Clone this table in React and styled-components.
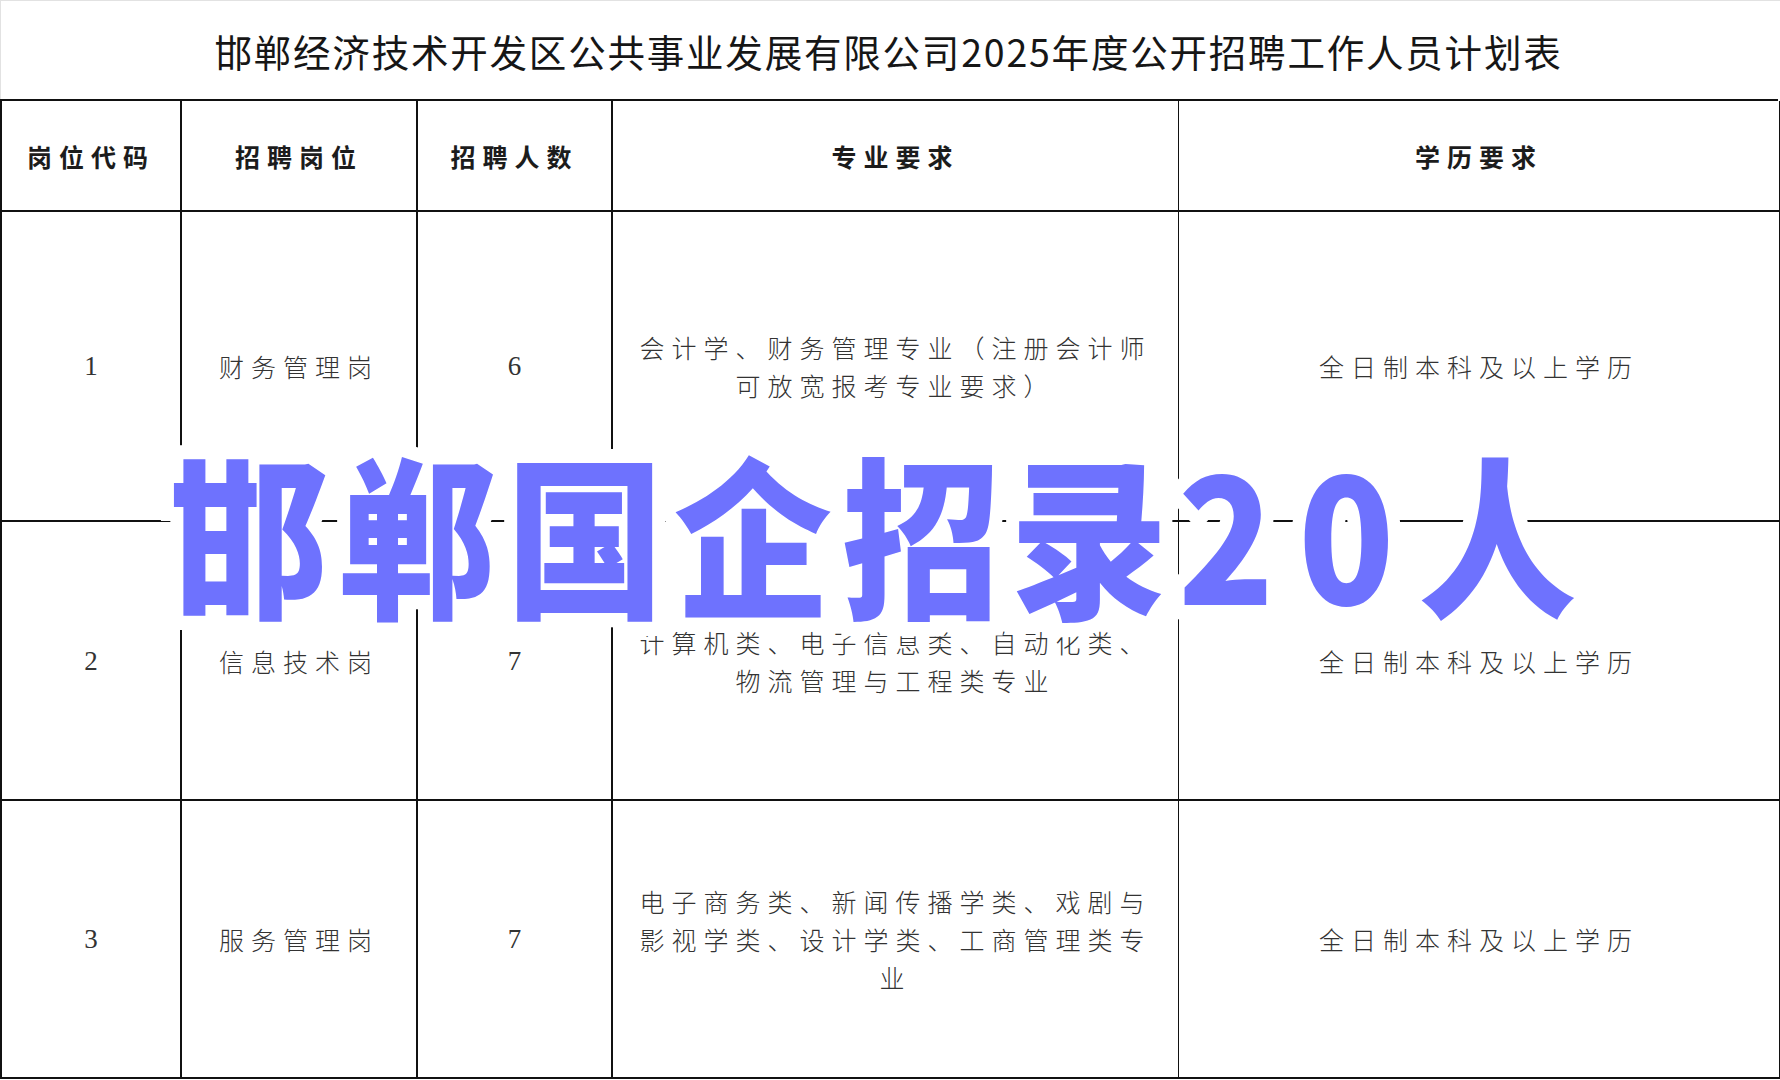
import React from 'react';
import styled, { createGlobalStyle } from 'styled-components';

const GlobalStyle = createGlobalStyle`
  html, body {
    margin: 0;
    padding: 0;
    background: #ffffff;
  }
  body {
    font-family: "Noto Sans CJK SC", "Noto Sans", sans-serif;
  }
`;

const Page = styled.div`
  position: relative;
  width: 1780px;
  height: 1080px;
  overflow: hidden;
  background: #fff;
`;

const TitleBar = styled.div`
  height: 98px;
  border-top: 1px solid #e2e2e2;
  border-left: 1px solid #e2e2e2;
  display: flex;
  align-items: center;
  justify-content: center;
  padding-right: 4px;
  font-family: "Noto Sans CJK SC", sans-serif;
  font-size: 37.5px;
  letter-spacing: 1.8px;
  color: #161616;
  font-weight: 400;
`;

const Table = styled.div`
  display: grid;
  grid-template-columns: 180px 236px 195px 566px 601px;
  grid-template-rows: 111px 310px 279px 278px;
  border-top: 2px solid #111;
  border-left: 2px solid #111;
  width: 1778px;
  box-sizing: border-box;
`;

const Cell = styled.div`
  box-sizing: border-box;
  border-right: ${p => (p.$thin ? '1.5px' : '2px')} solid #111;
  border-bottom: 2px solid #111;
  display: flex;
  align-items: center;
  justify-content: center;
  text-align: center;
  padding: 0 ${p => (p.$pad ? '18px' : '0')};
  color: ${p => (p.$head ? '#1c1c1c' : '#333333')};
  font-family: ${p =>
    p.$num
      ? '"Liberation Serif", "DejaVu Serif", serif'
      : '"Noto Sans CJK SC", sans-serif'};
  font-size: ${p => (p.$num ? '27px' : '25px')};
  font-weight: ${p => (p.$head ? 700 : 300)};
  letter-spacing: ${p => (p.$num ? '0' : '7px')};
  line-height: 38px;
`;

const Overlay = styled.div`
  position: absolute;
  top: 431px;
  left: 170px;
  pointer-events: none;
`;

const BigText = styled.div`
  font-family: "Noto Sans CJK SC", sans-serif;
  font-weight: 900;
  font-size: 158px;
  line-height: 200px;
  letter-spacing: 10px;
  white-space: nowrap;
  transform: scaleY(1.09);
  transform-origin: center;
  color: ${p => (p.$halo ? '#ffffff' : '#6e72fe')};
  -webkit-text-stroke: ${p => (p.$halo ? '26px #ffffff' : '0')};
  position: ${p => (p.$halo ? 'relative' : 'absolute')};
  top: 0;
  left: 0;
`;

const Digits = styled.span`
  letter-spacing: 24px;
`;

const rows = [
  {
    code: '1',
    post: '财务管理岗',
    count: '6',
    major: ['会计学、财务管理专业（注册会计师', '可放宽报考专业要求）'],
  },
  {
    code: '2',
    post: '信息技术岗',
    count: '7',
    major: ['计算机类、电子信息类、自动化类、', '物流管理与工程类专业'],
  },
  {
    code: '3',
    post: '服务管理岗',
    count: '7',
    major: ['电子商务类、新闻传播学类、戏剧与', '影视学类、设计学类、工商管理类专', '业'],
  },
];

const heads = ['岗位代码', '招聘岗位', '招聘人数', '专业要求', '学历要求'];

const Headline = ({ halo }) => (
  <BigText $halo={halo}>
    邯郸国企招录<Digits>20</Digits>人
  </BigText>
);

export default function App() {
  return (
    <Page>
      <GlobalStyle />
      <TitleBar>邯郸经济技术开发区公共事业发展有限公司2025年度公开招聘工作人员计划表</TitleBar>
      <Table>
        {heads.map((h, i) => (
          <Cell key={h} $head $thin={i >= 3}>
            {h}
          </Cell>
        ))}
        {rows.map(r => (
          <React.Fragment key={r.code}>
            <Cell $num>{r.code}</Cell>
            <Cell>{r.post}</Cell>
            <Cell $num>{r.count}</Cell>
            <Cell $pad $thin>
              <div>
                {r.major.map(line => (
                  <div key={line}>{line}</div>
                ))}
              </div>
            </Cell>
            <Cell $thin>全日制本科及以上学历</Cell>
          </React.Fragment>
        ))}
      </Table>
      <Overlay>
        <Headline halo />
        <Headline />
      </Overlay>
    </Page>
  );
}
